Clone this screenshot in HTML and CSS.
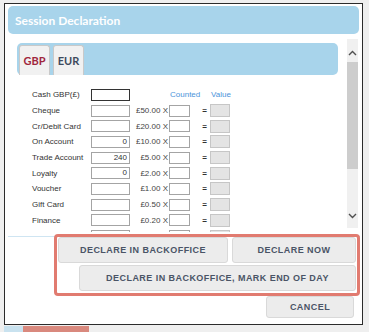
FILE: index.html
```html
<!DOCTYPE html>
<html>

<head>
    <title>Session Declaration</title>
    <link rel="stylesheet" href="styles.css">
</head>

<body>
    <div class="modal">
        <div class="title-bar">Session Declaration</div>
        <div class="body-area">
            <div class="scroll-content">
                <div class="tab-panel">
                    <div class="tab active">GBP</div>
                    <div class="tab">EUR</div>
                </div>
                <div class="grid">
                    <span class="label">Cash GBP(£)</span>
                    <span class="box focus"></span>
                    <span></span>
                    <span class="col-head">Counted</span>
                    <span></span>
                    <span class="col-head">Value</span>

                    <span class="label">Cheque</span>
                    <span class="box"></span>
                    <span class="denom">£50.00 X</span>
                    <span class="box"></span>
                    <span class="eq">=</span>
                    <span class="box value"></span>

                    <span class="label">Cr/Debit Card</span>
                    <span class="box"></span>
                    <span class="denom">£20.00 X</span>
                    <span class="box"></span>
                    <span class="eq">=</span>
                    <span class="box value"></span>

                    <span class="label">On Account</span>
                    <span class="box">0</span>
                    <span class="denom">£10.00 X</span>
                    <span class="box"></span>
                    <span class="eq">=</span>
                    <span class="box value"></span>

                    <span class="label">Trade Account</span>
                    <span class="box">240</span>
                    <span class="denom">£5.00 X</span>
                    <span class="box"></span>
                    <span class="eq">=</span>
                    <span class="box value"></span>

                    <span class="label">Loyalty</span>
                    <span class="box">0</span>
                    <span class="denom">£2.00 X</span>
                    <span class="box"></span>
                    <span class="eq">=</span>
                    <span class="box value"></span>

                    <span class="label">Voucher</span>
                    <span class="box"></span>
                    <span class="denom">£1.00 X</span>
                    <span class="box"></span>
                    <span class="eq">=</span>
                    <span class="box value"></span>

                    <span class="label">Gift Card</span>
                    <span class="box"></span>
                    <span class="denom">£0.50 X</span>
                    <span class="box"></span>
                    <span class="eq">=</span>
                    <span class="box value"></span>

                    <span class="label">Finance</span>
                    <span class="box"></span>
                    <span class="denom">£0.20 X</span>
                    <span class="box"></span>
                    <span class="eq">=</span>
                    <span class="box value"></span>

                    <span class="label">Store Transfer</span>
                    <span class="box"></span>
                    <span class="denom">£0.10 X</span>
                    <span class="box"></span>
                    <span class="eq">=</span>
                    <span class="box value"></span>
                </div>
            </div>
            <div class="scrollbar">
                <svg class="arrow" width="9" height="6" viewBox="0 0 9 6">
                    <polyline points="1,5 4.5,1.5 8,5" fill="none" stroke="#505050" stroke-width="1.4" />
                </svg>
                <div class="thumb"></div>
                <div class="track-rest"></div>
                <svg class="arrow" width="9" height="6" viewBox="0 0 9 6">
                    <polyline points="1,1 4.5,4.5 8,1" fill="none" stroke="#505050" stroke-width="1.4" />
                </svg>
            </div>
        </div>
        <div class="footer">
            <div class="declare-group">
                <div class="btn-row">
                    <button type="button" class="btn btn-backoffice">DECLARE IN BACKOFFICE</button>
                    <button type="button" class="btn btn-now">DECLARE NOW</button>
                </div>
                <div class="btn-row">
                    <button type="button" class="btn btn-eod">DECLARE IN BACKOFFICE, MARK END OF DAY</button>
                </div>
            </div>
            <button type="button" class="btn btn-cancel">CANCEL</button>
        </div>
    </div>
    <div class="behind">
        <div class="behind-blue"></div>
        <div class="behind-red"></div>
    </div>
</body>

</html>
```

FILE: styles.css
```css
body {
    margin: 0;
    width: 369px;
    height: 332px;
    overflow: hidden;
    font-family: "Liberation Sans", Arial, sans-serif;
    background-color: #efefef;
}

.modal {
    margin: 3px 0 0 4px;
    width: 359px;
    height: 322px;
    box-sizing: border-box;
    border: 1px solid #2b2b2b;
    background-color: #fff;
    padding: 2px 3px 0 3px;
    display: flex;
    flex-direction: column;
}

.title-bar {
    height: 28px;
    flex-shrink: 0;
    display: flex;
    align-items: center;
    padding-left: 7px;
    background-color: #a8d4eb;
    border-radius: 5px;
    color: #fff;
    font-family: Lato, "Liberation Sans", sans-serif;
    font-weight: bold;
    font-size: 12px;
}

.body-area {
    display: flex;
    margin-top: 5px;
    height: 193px;
    flex-shrink: 0;
    overflow: hidden;
}

.scroll-content {
    flex: 1;
    padding: 4px 9px 0 9px;
    overflow: hidden;
}

.tab-panel {
    height: 32px;
    box-sizing: border-box;
    background-color: #a8d4eb;
    border-radius: 5px;
    padding: 2px 0 0 2px;
    display: flex;
    gap: 3px;
}

.tab {
    width: 31px;
    box-sizing: border-box;
    border: 1px solid #c9c9c9;
    border-bottom: none;
    border-radius: 3px 3px 0 0;
    background-color: #f1f1f1;
    display: flex;
    align-items: center;
    justify-content: center;
    font-family: Lato, "Liberation Sans", sans-serif;
    font-weight: bold;
    font-size: 11px;
    color: #3e4a5d;
}

.tab.active {
    color: #a0263d;
}

.grid {
    display: grid;
    grid-template-columns: 59px 39px 39px 21px 20px 20px;
    grid-auto-rows: 15.7px;
    align-items: center;
    margin: 12px 0 0 15px;
    font-size: 8px;
    color: #333;
}

.label {
    white-space: nowrap;
}

.box {
    height: 12px;
    box-sizing: border-box;
    border: 1px solid #a4a4a4;
    background-color: #fff;
    text-align: right;
    padding-right: 2px;
    line-height: 10px;
}

.box.focus {
    border-color: #333;
}

.box.value {
    height: 13px;
    background-color: #e4e4e4;
    border-color: #c6c6c6;
}

.denom {
    text-align: right;
    padding-right: 1px;
    white-space: nowrap;
    color: #444;
}

.eq {
    text-align: right;
    padding-right: 3px;
    font-weight: bold;
}

.col-head {
    color: #4b93da;
    white-space: nowrap;
    padding-left: 1px;
}

.scrollbar {
    width: 11px;
    margin-right: 1px;
    height: 189px;
    background-color: #f0f0f0;
    display: flex;
    flex-direction: column;
    align-items: center;
}

.scrollbar .arrow {
    margin: 11px 0 6px;
    flex-shrink: 0;
}

.scrollbar .arrow:last-child {
    margin: 0 0 9px;
}

.thumb {
    width: 100%;
    height: 107px;
    background-color: #cdcdcd;
}

.track-rest {
    flex: 1;
}

.footer {
    border-top: 1px solid #cfe5f2;
    margin-top: 4px;
    display: flex;
    flex-direction: column;
    align-items: flex-end;
    margin-right: -1px;
}

.declare-group {
    width: 306px;
    box-sizing: border-box;
    margin-top: -3px;
    border: 3px solid #e17b70;
    border-radius: 4px;
    padding: 0 1px 2px 1px;
    display: flex;
    flex-direction: column;
    gap: 2px;
    position: relative;
}

.btn-row {
    display: flex;
    justify-content: flex-end;
    gap: 4px;
}

.btn {
    height: 26px;
    box-sizing: border-box;
    border: 1px solid #d9d9d9;
    border-radius: 3px;
    background-color: #ececec;
    color: #4a5466;
    font-family: "Liberation Sans", Arial, sans-serif;
    font-weight: bold;
    font-size: 9px;
    letter-spacing: 0.45px;
    padding: 0;
    cursor: pointer;
}

.btn-backoffice {
    width: 170px;
}

.btn-now {
    width: 124px;
}

.btn-eod {
    width: 277px;
}

.btn-cancel {
    width: 88px;
    height: 22px;
    margin: 0 6px 0 0;
}

.behind {
    display: flex;
    height: 8px;
    margin-top: 1px;
}

.behind-blue {
    width: 19px;
    background-color: #c9e2ef;
    margin-left: 4px;
}

.behind-red {
    width: 66px;
    background-color: #d9897e;
}
```
